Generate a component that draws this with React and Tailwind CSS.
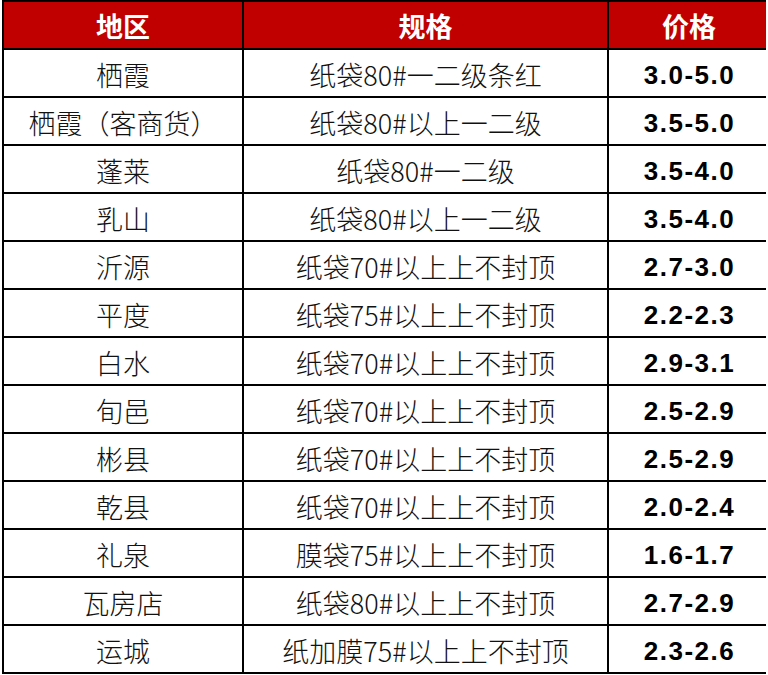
import React from "react";

const rows = [
  ["栖霞", "纸袋80#一二级条红", "3.0-5.0"],
  ["栖霞（客商货）", "纸袋80#以上一二级", "3.5-5.0"],
  ["蓬莱", "纸袋80#一二级", "3.5-4.0"],
  ["乳山", "纸袋80#以上一二级", "3.5-4.0"],
  ["沂源", "纸袋70#以上上不封顶", "2.7-3.0"],
  ["平度", "纸袋75#以上上不封顶", "2.2-2.3"],
  ["白水", "纸袋70#以上上不封顶", "2.9-3.1"],
  ["旬邑", "纸袋70#以上上不封顶", "2.5-2.9"],
  ["彬县", "纸袋70#以上上不封顶", "2.5-2.9"],
  ["乾县", "纸袋70#以上上不封顶", "2.0-2.4"],
  ["礼泉", "膜袋75#以上上不封顶", "1.6-1.7"],
  ["瓦房店", "纸袋80#以上上不封顶", "2.7-2.9"],
  ["运城", "纸加膜75#以上上不封顶", "2.3-2.6"],
];

const cjk = "font-['Noto_Sans_CJK_SC',sans-serif]";

export default function App() {
  return (
    <div className="w-[768px] h-[675px] bg-white overflow-hidden">
      <div className="ml-[2px] w-[764px] border-l-2 border-t-2 border-black grid grid-cols-[240px_365px_157px]">
        <div className={`h-[48px] bg-[#c00000] border-r-2 border-b-2 border-black flex items-center justify-center text-white font-bold text-[27px] leading-none ${cjk}`}>
          地区
        </div>
        <div className={`h-[48px] bg-[#c00000] border-r-2 border-b-2 border-black flex items-center justify-center text-white font-bold text-[27px] leading-none ${cjk}`}>
          规格
        </div>
        <div className={`h-[48px] bg-[#c00000] border-b-2 border-black flex items-center justify-center text-white font-bold text-[27px] leading-none pl-[3px] ${cjk}`}>
          价格
        </div>
        {rows.map((r, i) => (
          <React.Fragment key={i}>
            <div className={`h-[48px] border-r-2 border-b-2 border-black flex items-center justify-center text-[#111] font-light text-[27px] leading-none pt-[2px] ${cjk}`}>
              {r[0]}
            </div>
            <div className={`h-[48px] border-r-2 border-b-2 border-black flex items-center justify-center text-[#111] font-light text-[27px] leading-none pt-[2px] ${cjk}`}>
              {r[1]}
            </div>
            <div className="h-[48px] border-b-2 border-black flex items-center justify-center text-black font-bold text-[26px] tracking-[1.5px] leading-none pl-[4px] pt-[4px] font-['Liberation_Sans',Arial,sans-serif]">
              {r[2]}
            </div>
          </React.Fragment>
        ))}
      </div>
    </div>
  );
}
